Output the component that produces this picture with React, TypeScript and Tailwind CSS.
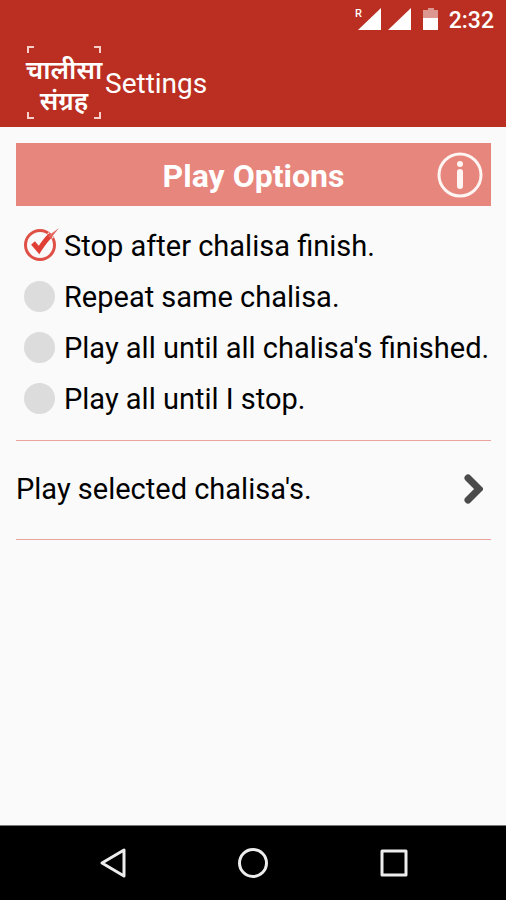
import { useState } from 'react';

const PLAY_OPTIONS = [
  { id: 'stop', label: 'Stop after chalisa finish.' },
  { id: 'repeat', label: 'Repeat same chalisa.' },
  { id: 'all', label: "Play all until all chalisa's finished." },
  { id: 'loop', label: 'Play all until I stop.' },
];

function StatusBar() {
  return (
    <div className="flex h-10 items-center justify-end pr-3 text-white">
      <svg width="92" height="40" viewBox="0 0 92 40" fill="currentColor" aria-hidden="true">
        <path d="M32 8v22H9z" />
        <path d="M62 8v22H39z" />
        <path d="M79 8h6v2h4v8H74v-8h5z" opacity="0.5" />
        <path d="M74 18h15v12H74z" />
        <text x="6" y="17" fontSize="11" fontWeight="500" fontFamily="Roboto, sans-serif">
          R
        </text>
      </svg>
      <span className="ml-2 pt-0.5 text-[23px] leading-10 font-medium">2:32</span>
    </div>
  );
}

function Logo() {
  return (
    <div className="relative flex h-[74px] w-[74px] flex-col items-center justify-center pt-2 text-[26px] leading-[31px] font-semibold whitespace-nowrap">
      <svg
        className="absolute inset-0"
        width="74"
        height="74"
        viewBox="0 0 74 74"
        fill="none"
        stroke="#f6cfc9"
        strokeWidth="2"
        aria-hidden="true"
      >
        <path d="M1 8V2h6M67 2h6v6M73 67v6h-6M7 73H1v-6" />
      </svg>
      <span>चालीसा</span>
      <span>संग्रह</span>
    </div>
  );
}

function TickMark() {
  return (
    <svg
      className="pointer-events-none col-start-1 row-start-1 hidden peer-checked:block"
      width="36"
      height="36"
      viewBox="0 0 36 36"
      fill="none"
      aria-hidden="true"
    >
      <circle cx="16" cy="17" r="14.5" stroke="#df5046" strokeWidth="3" />
      <path d="M24 5l5 5" stroke="#fafafa" strokeWidth="2" />
      <path d="M9 15l6 7Q22 11 27 7" stroke="#df3f35" strokeWidth="5" />
      <path d="M24 8L35 0 27 10z" fill="#e4675f" />
    </svg>
  );
}

export default function App() {
  const [selected, setSelected] = useState('stop');

  return (
    <div className="flex min-h-screen flex-col bg-[#fafafa] font-[Roboto,'Noto_Sans',sans-serif] text-black">
      {/* App bar */}
      <header className="bg-[#bb2f22] pb-2 text-white">
        <StatusBar />
        <div className="flex items-center gap-1 pt-[5px] pl-[27px]">
          <Logo />
          <h1 className="pt-1 text-[28px] leading-9">Settings</h1>
        </div>
      </header>

      <main className="flex-1 pt-4 pr-[15px] pl-4">
        {/* Play options */}
        <section>
          <div className="flex h-[63px] items-center bg-[#e7867d] pr-2 pl-[54px] text-white">
            <h2 id="play-options" className="flex-1 pt-0.5 text-center text-[32px] leading-9 font-bold">
              Play Options
            </h2>
            <button type="button" aria-label="Information">
              <svg width="46" height="46" viewBox="0 0 46 46" fill="#fff5f3" aria-hidden="true">
                <circle cx="23" cy="23" r="21" fill="none" stroke="#fff5f3" strokeWidth="3" />
                <circle cx="23" cy="12" r="3" />
                <rect x="20" y="17" width="6" height="20" rx="3" />
              </svg>
            </button>
          </div>

          <div role="radiogroup" aria-labelledby="play-options" className="flex flex-col pt-3.5 pb-4 pl-2">
            {PLAY_OPTIONS.map((option) => (
              <label
                key={option.id}
                className="flex h-[51px] items-center gap-1 text-[29px] leading-9 whitespace-nowrap"
              >
                <span className="grid w-9 items-center">
                  <input
                    type="radio"
                    name="play-option"
                    value={option.id}
                    checked={selected === option.id}
                    onChange={() => setSelected(option.id)}
                    className="peer col-start-1 row-start-1 size-[31px] appearance-none rounded-full bg-[#dcdcdc] checked:bg-transparent"
                  />
                  <TickMark />
                </span>
                {option.label}
              </label>
            ))}
          </div>
        </section>

        {/* Playlist link */}
        <div className="border-y border-[#eaa39d]">
          <button
            type="button"
            className="flex h-[98px] w-full items-center justify-between pr-2 pb-0.5 text-left text-[29px] leading-9"
          >
            Play selected chalisa&apos;s.
            <svg width="20" height="32" viewBox="0 0 20 32" fill="none" aria-hidden="true">
              <path d="M5 5l11 11L5 27" stroke="#4b4b4b" strokeWidth="7" strokeLinecap="round" />
            </svg>
          </button>
        </div>
      </main>

      {/* System navigation */}
      <nav className="flex h-[75px] items-center justify-between border-t border-[#777777] bg-black px-24 text-[#ededed]">
        <button type="button" aria-label="Back">
          <svg width="32" height="32" viewBox="0 0 32 32" fill="none" stroke="currentColor" strokeWidth="3" strokeLinejoin="round">
            <path d="M28 3v26L6 16z" />
          </svg>
        </button>
        <button type="button" aria-label="Home">
          <svg width="32" height="32" viewBox="0 0 32 32" fill="none" stroke="currentColor" strokeWidth="3">
            <circle cx="16" cy="16" r="13.5" />
          </svg>
        </button>
        <button type="button" aria-label="Recent apps">
          <svg width="32" height="32" viewBox="0 0 32 32" fill="none" stroke="currentColor" strokeWidth="3" strokeLinejoin="round">
            <rect x="4" y="4" width="24" height="24" />
          </svg>
        </button>
      </nav>
    </div>
  );
}
